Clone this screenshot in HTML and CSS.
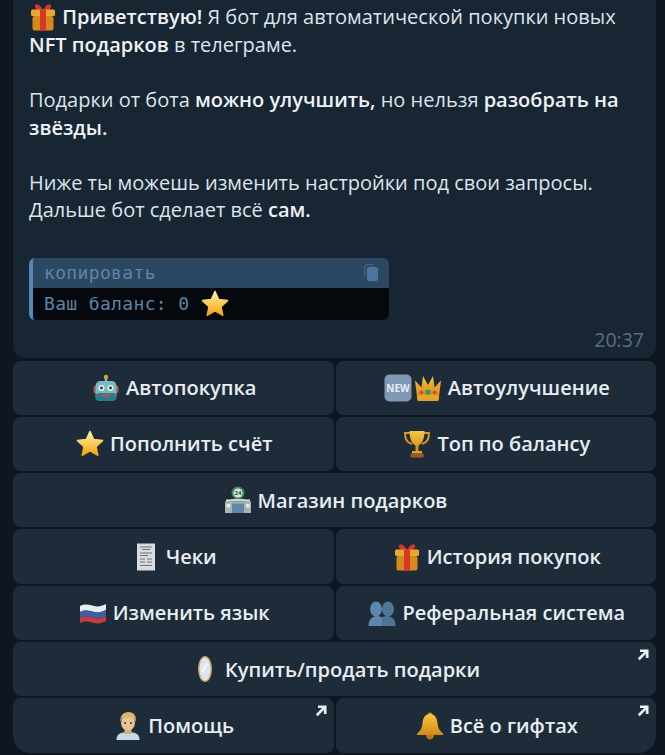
FILE: index.html
```html
<!DOCTYPE html>
<html lang="ru">
<head>
  <meta charset="UTF-8">
  <title>Бот подарков</title>
  <link rel="stylesheet" href="styles.css">
</head>
<body>

  <svg class="defs" width="0" height="0">
    <defs>
      <linearGradient id="starFill" x1="0" y1="0" x2="0" y2="1">
        <stop offset="0" stop-color="#fff3a8"/>
        <stop offset="1" stop-color="#f4a20c"/>
      </linearGradient>
      <linearGradient id="goldFill" x1="0" y1="0" x2="0" y2="1">
        <stop offset="0" stop-color="#f6c544"/>
        <stop offset="1" stop-color="#d58a12"/>
      </linearGradient>
      <symbol id="i-gift" viewBox="0 0 28 28">
        <path d="M14 7C10 0 5 0 6 4c.5 3 4 4 8 3zM14 7c4-7 9-7 8-3-.5 3-4 4-8 3z" fill="#d8352b"/>
        <rect x="2" y="6.500" width="24" height="6.500" rx="1.500" fill="#eaa92e"/>
        <rect x="3.500" y="13" width="21" height="14.500" rx="2" fill="#d68a1a"/>
        <rect x="11" y="6.500" width="6" height="21" fill="#d8352b"/>
      </symbol>
      <symbol id="i-robot" viewBox="0 0 28 28">
        <circle cx="14" cy="3" r="2.200" fill="#e0a23a"/>
        <rect x="12.800" y="4.500" width="2.400" height="3" fill="#9fb1b8"/>
        <rect x="1.500" y="12" width="3" height="7" rx="1.200" fill="#b9524a"/>
        <rect x="23.500" y="12" width="3" height="7" rx="1.200" fill="#b9524a"/>
        <rect x="3.500" y="7" width="21" height="20" rx="5" fill="#79b9c4"/>
        <rect x="3.500" y="19" width="21" height="8" rx="4" fill="#2c7b8c"/>
        <circle cx="9.500" cy="14" r="3" fill="#e6f2f2"/>
        <circle cx="18.500" cy="14" r="3" fill="#e6f2f2"/>
        <circle cx="9.500" cy="14" r="1.400" fill="#22343c"/>
        <circle cx="18.500" cy="14" r="1.400" fill="#22343c"/>
        <rect x="10" y="20" width="8" height="2.200" rx="1" fill="#c4504a"/>
      </symbol>
      <symbol id="i-new" viewBox="0 0 28 28">
        <rect x="0.500" y="0.500" width="27" height="27" rx="5" fill="#7f98b5"/>
        <text x="14" y="18" text-anchor="middle" class="new-label">NEW</text>
      </symbol>
      <symbol id="i-crown" viewBox="0 0 28 28">
        <path d="M3 23L1 6.500l6.500 7L9 2l5 9 5-9 1.500 11.500 6.500-7L25 23z" fill="url(#goldFill)"/>
        <rect x="3" y="21" width="22" height="6" rx="2" fill="#e3a52c"/>
        <circle cx="14" cy="18" r="2.600" fill="#2e9c6a"/>
        <circle cx="7.500" cy="18.500" r="1.800" fill="#d0423f"/>
        <circle cx="20.500" cy="18.500" r="1.800" fill="#d0423f"/>
      </symbol>
      <symbol id="i-star" viewBox="0 0 28 28">
        <path d="M14 1.500l3.700 8.100 8.800 1-6.500 6 1.800 8.700L14 20.900l-7.800 4.400L8 16.600l-6.500-6 8.800-1z" fill="url(#starFill)" stroke="url(#starFill)" stroke-width="1.500" stroke-linejoin="round"/>
      </symbol>
      <symbol id="i-trophy" viewBox="0 0 28 28">
        <path d="M7 3H2c0 7 3 10 7 11M21 3h5c0 7-3 10-7 11" fill="none" stroke="#d9962a" stroke-width="2"/>
        <path d="M6.500 1h15c0 8-2.500 13-6 14.500v5.500h-3v-5.500C9 14 6.500 9 6.500 1z" fill="url(#goldFill)"/>
        <rect x="9" y="21" width="10" height="2.500" fill="#e3a52c"/>
        <rect x="7.500" y="23.500" width="13" height="4" fill="#9c5a22"/>
      </symbol>
      <symbol id="i-store" viewBox="0 0 28 28">
        <circle cx="14" cy="7" r="6.500" fill="#3d8c5c"/>
        <circle cx="14" cy="7" r="4.500" fill="#d9e6dc"/>
        <text x="14" y="9" text-anchor="middle" class="store-label">24</text>
        <rect x="7" y="13" width="14" height="2.500" fill="#cfd6d2"/>
        <rect x="1" y="15.500" width="26" height="11.500" fill="#aab5ad"/>
        <rect x="2" y="13.500" width="5" height="2" fill="#dfe5e0"/>
        <rect x="21" y="13.500" width="5" height="2" fill="#dfe5e0"/>
        <rect x="8" y="17.500" width="12" height="9.500" fill="#5f86ad"/>
        <rect x="2.500" y="18" width="3.500" height="3.500" fill="#e8ece9"/>
        <rect x="22" y="18" width="3.500" height="3.500" fill="#e8ece9"/>
      </symbol>
      <symbol id="i-receipt" viewBox="0 0 28 28">
        <rect x="5" y="0.500" width="18" height="27" fill="#d8dcdf"/>
        <path d="M8 4h12M10 6.500h8M8 10h12M8 12.500h8M8 16h5M15 16h5M8 19h5M15 19h5M8 22.500h12" stroke="#6b7278" stroke-width="1.200"/>
      </symbol>
      <symbol id="i-flag" viewBox="0 0 28 28">
        <path d="M1 7c6-3 10-1 14 0s8 0 12-2v6c-4 2-8 3-12 2S7 10 1 13z" fill="#e8edf0"/>
        <path d="M1 13c6-3 10-1 14 0s8 0 12-2v6c-4 2-8 3-12 2S7 16 1 19z" fill="#3c5fa8"/>
        <path d="M1 19c6-3 10-1 14 0s8 0 12-2v5c-4 2-8 3-12 2S7 21 1 24z" fill="#c93a3f"/>
      </symbol>
      <symbol id="i-busts" viewBox="0 0 28 28">
        <ellipse cx="8" cy="10" rx="6" ry="7.500" fill="#5f86ab"/>
        <ellipse cx="20" cy="10" rx="6" ry="7.500" fill="#4f7599"/>
        <path d="M0.500 27c0-6 2.500-9 7.500-10 3 0 5 .5 6 1.500v8.500z" fill="#5f86ab"/>
        <path d="M27.500 27c0-6-2.500-9-7.500-10-3 0-5 .5-6 1.500v8.500z" fill="#4f7599"/>
      </symbol>
      <symbol id="i-mirror" viewBox="0 0 28 28">
        <ellipse cx="14" cy="14" rx="7" ry="13" fill="#c9a66b"/>
        <ellipse cx="14" cy="14" rx="5.500" ry="11.500" fill="#dbe7ef"/>
        <path d="M10.500 16l5-8 1.500 1-5 9z" fill="#f6fafc"/>
      </symbol>
      <symbol id="i-man" viewBox="0 0 28 28">
        <path d="M2.500 28c0-6 4-8 11.500-8s11.500 2 11.500 8z" fill="#c3dbe6"/>
        <rect x="10.500" y="15" width="7" height="7" fill="#d9ab7e"/>
        <ellipse cx="14" cy="10.500" rx="7" ry="8" fill="#e9c29a"/>
        <path d="M6.500 10c-1-6 3-10 8-10s8.500 4 7 10c-1-3-2-5-4-5-3 1-8 1-9 0-1 1-1.500 3-2 5z" fill="#d9b56b"/>
        <circle cx="11" cy="11" r="1" fill="#4a3524"/>
        <circle cx="17" cy="11" r="1" fill="#4a3524"/>
      </symbol>
      <symbol id="i-bell" viewBox="0 0 28 28">
        <circle cx="14" cy="3" r="2.500" fill="#c98a1c"/>
        <path d="M14 2c5 0 7 4 7.500 9 .5 5 2 8 5.500 10.500v1.500H1v-1.500C4.500 19 6 16 6.500 11 7 6 9 2 14 2z" fill="url(#goldFill)"/>
        <path d="M10 23h8c0 3-2 4.500-4 4.500S10 26 10 23z" fill="#b9780f"/>
      </symbol>
      <symbol id="i-copy" viewBox="0 0 14 17">
        <path d="M4 0h5v1.500H4A2.500 2.500 0 0 0 1.500 4v9H0V4a4 4 0 0 1 4-4z" fill="#3f5f80"/>
        <rect x="3" y="3" width="11" height="14" rx="2.500" fill="#4f769e"/>
      </symbol>
      <symbol id="i-arrow" viewBox="0 0 10 10">
        <path d="M1.500 8.500L8 2M2.500 1.500H8.500V7.500" fill="none" stroke="#e8eef3" stroke-width="2.200"/>
      </symbol>
    </defs>
  </svg>

  <div class="chat">
    <div class="message">
      <p><svg class="emoji"><use href="#i-gift"/></svg> <b>Приветствую!</b> Я бот для автоматической покупки новых <b>NFT подарков</b> в телеграме.</p>
      <p>Подарки от бота <b>можно улучшить,</b> но нельзя <b>разобрать на звёзды.</b></p>
      <p>Ниже ты можешь изменить настройки под свои запросы. Дальше бот сделает всё <b>сам.</b></p>
      <div class="code">
        <div class="code-head">
          <span>копировать</span>
          <svg class="copy-icon"><use href="#i-copy"/></svg>
        </div>
        <div class="code-body">Ваш баланс: 0 <svg class="emoji"><use href="#i-star"/></svg></div>
      </div>
      <div class="time">20:37</div>
    </div>

    <div class="keyboard">
      <a class="key"><svg class="emoji"><use href="#i-robot"/></svg>Автопокупка</a>
      <a class="key"><svg class="emoji"><use href="#i-new"/></svg><svg class="emoji"><use href="#i-crown"/></svg>Автоулучшение</a>
      <a class="key"><svg class="emoji"><use href="#i-star"/></svg>Пополнить счёт</a>
      <a class="key"><svg class="emoji"><use href="#i-trophy"/></svg>Топ по балансу</a>
      <a class="key wide"><svg class="emoji"><use href="#i-store"/></svg>Магазин подарков</a>
      <a class="key"><svg class="emoji"><use href="#i-receipt"/></svg>Чеки</a>
      <a class="key"><svg class="emoji"><use href="#i-gift"/></svg>История покупок</a>
      <a class="key"><svg class="emoji"><use href="#i-flag"/></svg>Изменить язык</a>
      <a class="key"><svg class="emoji"><use href="#i-busts"/></svg>Реферальная система</a>
      <a class="key wide"><svg class="emoji"><use href="#i-mirror"/></svg>Купить/продать подарки<svg class="link-arrow"><use href="#i-arrow"/></svg></a>
      <a class="key corner-left"><svg class="emoji"><use href="#i-man"/></svg>Помощь<svg class="link-arrow"><use href="#i-arrow"/></svg></a>
      <a class="key corner-right"><svg class="emoji"><use href="#i-bell"/></svg>Всё о гифтах<svg class="link-arrow"><use href="#i-arrow"/></svg></a>
    </div>
  </div>

</body>
</html>
```

FILE: styles.css
```css
:root {
  --bg: #0e1621;
  --bubble: #182533;
  --key: #1e2c3a;
  --text: #dde4ea;
  --key-text: #e8edf2;
  --muted: #5c6e80;
}
body {
  margin: 0;
  background: var(--bg);
  color: var(--text);
  font-family: "Open Sans", sans-serif;
  font-size: 20px;
  overflow: hidden;
}
.defs {
  display: block;
}
.new-label {
  font-family: "Open Sans", sans-serif;
  font-size: 10px;
  font-weight: 700;
  fill: #e6edf3;
}
.store-label {
  font-family: "Open Sans", sans-serif;
  font-size: 6px;
  font-weight: 700;
  fill: #2b4a38;
}
.chat {
  padding: 0 9px 0 13px;
}
.message {
  background: var(--bubble);
  border-radius: 0 0 12px 12px;
  padding: 3px 12px 6px 16px;
  line-height: 27.5px;
}
.message p {
  margin: 0 0 27.5px;
}
.message b {
  font-weight: 600;
  color: #eef2f5;
}
.emoji {
  width: 28px;
  height: 28px;
  flex: none;
  vertical-align: -7px;
}
.emoji + .emoji {
  margin-left: -4px;
}
.code {
  width: 356px;
  margin-top: 34px;
  border-left: 4px solid #5488bb;
  border-radius: 6px;
  overflow: hidden;
  font-family: "DejaVu Sans Mono", monospace;
  font-size: 18px;
  letter-spacing: 0.35px;
  color: #5e84a8;
}
.code-head {
  height: 30px;
  background: #2c4762;
  padding: 0 11px 0 11px;
  display: flex;
  justify-content: space-between;
  align-items: center;
}
.copy-icon {
  width: 14px;
  height: 17px;
}
.code-body {
  height: 32px;
  background: #05080d;
  padding-left: 11px;
  display: flex;
  align-items: center;
  white-space: pre;
}
.time {
  text-align: right;
  color: var(--muted);
  font-size: 19.5px;
  line-height: 24px;
  margin-top: 8px;
}
.keyboard {
  display: grid;
  grid-template-columns: 1fr 1fr;
  gap: 2px;
  margin-top: 3px;
}
.key {
  position: relative;
  height: 54.33px;
  padding-left: 2px;
  box-sizing: border-box;
  background: var(--key);
  border-radius: 8px;
  color: var(--key-text);
  font-weight: 600;
  display: flex;
  justify-content: center;
  align-items: center;
  gap: 6px;
}
.wide {
  grid-column: span 2;
}
.corner-left {
  border-bottom-left-radius: 18px;
}
.corner-right {
  border-bottom-right-radius: 18px;
}
.link-arrow {
  position: absolute;
  top: 7px;
  right: 7px;
  width: 12px;
  height: 12px;
}
```
